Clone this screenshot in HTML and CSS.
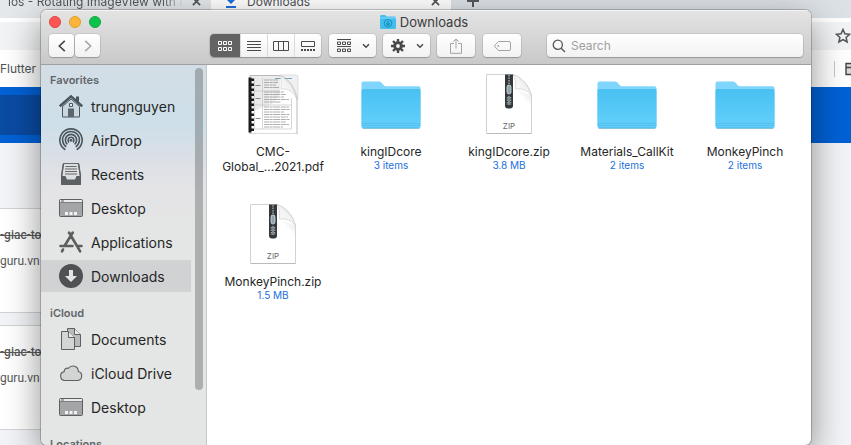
FILE: index.html
```html
<!DOCTYPE html>
<html lang="en">
<head>
<meta charset="utf-8">
<title>Downloads</title>
<link rel="stylesheet" href="styles.css">
</head>
<body>
<svg class="sprite" aria-hidden="true">
  <defs>
    <linearGradient id="folderFill" x1="0" y1="0" x2="0" y2="1">
      <stop offset="0" stop-color="#48c1f2"/><stop offset="1" stop-color="#64d0fa"/>
    </linearGradient>
    <linearGradient id="curl" x1="0" y1="1" x2="1" y2="0">
      <stop offset="0" stop-color="#ffffff"/><stop offset="0.5" stop-color="#f4f4f4"/><stop offset="1" stop-color="#d0d0d0"/>
    </linearGradient>
    <linearGradient id="curlShade" x1="0" y1="1" x2="1" y2="0">
      <stop offset="0.3" stop-color="#ffffff" stop-opacity="0"/><stop offset="1" stop-color="#a8a8a8"/>
    </linearGradient>
  </defs>
  <symbol id="folder" viewBox="0 0 60 60">
    <path d="M0.500 9.500q0-2 2-2h15.500q1.500 0 2.500 1.200l2.500 2.800q.8.800 2 .800h32.500q2 0 2 2v38q0 2-2 2h-55q-2 0-2-2z" fill="#7fd5fb"/>
    <path d="M.5 17q0-1.500 1.500-1.500h56q1.500 0 1.500 1.500v35q0 2-2 2h-55q-2 0-2-2z" fill="url(#folderFill)"/>
    <path d="M.5 15.500h59M1 49.500h58M1 51.500h58" stroke="#3fb2e2" stroke-width=".8" opacity=".6"/>
    <path d="M1.500 54.200h57" stroke="#3b9ac4" stroke-width=".8"/>
  </symbol>
  <symbol id="zip" viewBox="0 0 60 60">
    <path d="M7.500.5H34C44 4 50 12 52.500 22v37.500h-45z" fill="#fff" stroke="#d2d2d2"/>
    <path d="M8 59.500h44.500" stroke="#bbb"/>
    <path d="M37 15L52 22v10z" fill="url(#curlShade)" opacity=".5"/>
    <path d="M34 .5C36.500 4 37 9 36.500 15c6-1 12 1 16 7C50 12 44 4 34 .5z" fill="url(#curl)" stroke="#cfcfcf" stroke-width=".7"/>
    <path d="M26 .5h8v31q0 3-3 3h-2q-3 0-3-3z" fill="#34383a"/>
    <path d="M30 1v9M28 12h4M28 14.500h4M28.500 23v8M31.500 23v8" stroke="#98a4a9" stroke-width="1.500" stroke-dasharray="1.500 1"/>
    <rect x="28" y="11" width="4" height="9" rx="2" fill="#8fa4ac" stroke="#d3dde0" stroke-width=".8"/>
    <path d="M29 22h2v9h-2z" fill="#7d8b90"/>
    <text x="30" y="55" class="zip-text">ZIP</text>
  </symbol>
  <symbol id="pdf" viewBox="0 0 60 60">
    <path d="M7 1.500h30C47 5 52 14 54 25v35H7z" fill="#fff" stroke="#b9b9b9"/>
    <path d="M8 2h29v18L29 30 8 38z" fill="#e4e4e4" opacity=".7"/>
    <path d="M11.500 4v51M19.500 4v51M48.500 24v31M11.500 17h25M11.500 31h37M11.500 55h37" stroke="#c4c4c4" stroke-width=".7"/>
    <path d="M21 6h14M21 8.500h14M21 11h12M21 13.500h15M21 18h20M21 20.500h22M21 23h20M21 25.500h25M21 28h17M21 33h25M21 35.500h26M21 38h20M21 40.500h26M21 43h24M21 45.500h26M21 48h22M21 50.500h25M21 53h19" stroke="#999" stroke-width=".8" stroke-dasharray="5 .6 3 .5 7 .7"/>
    <path d="M12.500 11.500h5M12.500 24.500h5M12.500 44.500h5" stroke="#888"/>
    <path d="M37 1h16q2 0 2 2v23C52 14 47 5 37 1z" fill="#f0f0f0" stroke="#d0d0d0" stroke-width=".6"/>
    <path d="M32 4.500h17" stroke="#6b9db8" stroke-width=".9"/>
    <path d="M36 1.500C39 5 38.500 10 38 15c7-1 13 3 16 11C52 15 46 5 36 1.500z" fill="url(#curl)" stroke="#c8c8c8" stroke-width=".6"/>
    <path d="M7 3.500v55" stroke="#1c1c1c" stroke-width="3"/>
    <path d="M9 4.500v54" stroke="#1c1c1c" stroke-width="4" stroke-dasharray="2.500 2.500"/>
  </symbol>
  <symbol id="home" viewBox="0 0 24 24">
    <path d="M3.500 12.500v10.500h17V12.500L12 5z" fill="#c5d0d7" fill-opacity=".5" stroke="#4b555b"/>
    <path d="M.8 12.300L12 2.400l11.200 9.900" fill="none" stroke="#4b555b" stroke-width="2.600"/>
    <path d="M17 2.500h3V9l-3-2.600z" fill="#4b555b"/>
    <path d="M9 14.500h6V23H9z" fill="#5b666c"/>
    <path d="M10.500 9.500h3v3h-3z" fill="#e2eaf0" stroke="#4b555b"/>
  </symbol>
  <symbol id="airdrop" viewBox="0 0 24 24">
    <g fill="none" stroke="#4c555b" stroke-width="1.600">
      <path d="M6.300 21.700a11.200 11.200 0 1 1 11.400 0"/>
      <path d="M7.300 18.800a8.400 8.400 0 1 1 9.400 0"/>
      <path d="M8.400 16.300a5.600 5.600 0 1 1 7.200 0"/>
      <path d="M10 14.300a2.900 2.900 0 1 1 4 0"/>
    </g>
    <circle cx="12" cy="12.300" r="1.400" fill="#4c555b"/>
  </symbol>
  <symbol id="recents" viewBox="0 0 24 24">
    <path d="M4.500 1.500h15l2 13v8h-19v-8z" fill="#dcdee0" stroke="#666b6f"/>
    <path d="M6.500 4.500h11M6 7h12M6 9.500h12M6 12h12" stroke="#666b6f" stroke-width="1.200"/>
    <path d="M2 14h4.500l1.500 3.500h8l1.500-3.500H22v8q0 1-1 1H3q-1 0-1-1z" fill="#5c6063"/>
    <path d="M4.500 1.500l-2 13M19.500 1.500l2 13" stroke="#5c6063" stroke-width="1.500"/>
  </symbol>
  <symbol id="desktop" viewBox="0 0 24 24">
    <rect x=".5" y="3.500" width="23" height="17" rx="1" fill="#a3a5a6" stroke="#5d6062"/>
    <path d="M1 4h22v2H1z" fill="#ececec"/><path d="M2 5h3" stroke="#5d6062"/>
    <path d="M1 6.500h22" stroke="#7d8082"/>
    <path d="M6 16h3v3H6zM10.500 16h3v3h-3zM15 16h3v3h-3z" fill="#f2f2f2"/>
  </symbol>
  <symbol id="apps" viewBox="0 0 24 24">
    <path d="M13.800 2.500L5.500 16M4 19.500l-1 1.800M10 2.500l9.500 16 1.600 2.800M1.500 16h12M18 16h4.500" fill="none" stroke="#5c5e5f" stroke-width="2.600" stroke-linecap="round"/>
  </symbol>
  <symbol id="down" viewBox="0 0 24 24">
    <circle cx="12" cy="12" r="12" fill="#505152"/>
    <path d="M10 6h4v6h4l-6 6-6-6h4z" fill="#e3e4e5"/>
  </symbol>
  <symbol id="docs" viewBox="0 0 24 24">
    <path d="M8.500 1.500h7l6 6v12h-13z" fill="#b9bbbb" stroke="#5d6062"/>
    <path d="M15.500 1.500v6h6" fill="#eee" stroke="#5d6062"/>
    <path d="M2.500 4.500h7l6 6v12h-13z" fill="#d3d5d5" stroke="#5d6062"/>
    <path d="M9.500 4.500v6h6" fill="#eee" stroke="#5d6062"/>
  </symbol>
  <symbol id="cloud" viewBox="0 0 24 24">
    <path d="M6 19.500a4.500 4.500 0 0 1-.8-8.900 3.200 3.200 0 0 1 4.300-3.300 5.400 5.400 0 0 1 9.800 3.200 4.600 4.600 0 0 1-.5 9z" fill="#d2d4d4" stroke="#5d6062" stroke-width="1.100"/>
  </symbol>
  <symbol id="chevron" viewBox="0 0 8 6">
    <path d="M1 1.200l3 3 3-3" fill="none" stroke="#4a4a4a" stroke-width="1.500"/>
  </symbol>
</svg>

<div class="browser">
  <div class="tabs">
    <div class="tab tab-first"><span class="tab-title">ios - Rotating ImageView with t</span><button class="tab-x" aria-label="Close tab"><svg viewBox="0 0 10 10"><path d="M1 1l8 8M9 1L1 9"/></svg></button></div>
    <div class="tab tab-active"><svg class="fav" viewBox="0 0 10 14"><path d="M3 0h4v5h3L5 10 0 5h3zM0 12h10v2H0z" fill="#1a6fe0"/></svg><span class="tab-title">Downloads</span><button class="tab-x" aria-label="Close tab"><svg viewBox="0 0 10 10"><path d="M1 1l8 8M9 1L1 9"/></svg></button></div>
    <button class="tab-new" aria-label="New tab"><svg viewBox="0 0 12 12"><path d="M6 0v12M0 6h12"/></svg></button>
  </div>
  <div class="address"><svg class="star" viewBox="0 0 16 16"><path d="M8 1.500l1.900 4.300 4.700.5-3.500 3.100 1 4.600L8 11.600 3.900 14l1-4.600L1.400 6.300l4.700-.5z"/></svg></div>
  <div class="bookmarks"><a href="#">Flutter</a><span class="divider"></span><svg class="bm" viewBox="0 0 14 14"><path d="M1 1.500h12v11H1zM1 5.500h12" fill="#d8d8d8" stroke="#444" stroke-width="1.400"/></svg></div>
  <div class="banner"><div class="banner-box"></div></div>
  <div class="cards">
    <div class="card"><s>-giac-to</s><span>guru.vn</span></div>
    <div class="card"><s>-giac-to</s><span>guru.vn</span></div>
  </div>
</div>

<main class="finder">
  <header class="titlebar">
    <div class="title-row">
      <div class="lights"><button class="light red" aria-label="Close"></button><button class="light yellow" aria-label="Minimize"></button><button class="light green" aria-label="Zoom"></button></div>
      <h1 class="title"><svg viewBox="0 0 16 14"><path d="M0 1.500Q0 0 1.500 0H5l1.500 1.500h8Q16 1.500 16 3v9.500q0 1.500-1.500 1.500h-13Q0 14 0 12.500z" fill="#42bdec"/><path d="M0 3h16" stroke="#86d9f8"/><circle cx="8" cy="8.300" r="3.800" fill="none" stroke="#168fbd"/><path d="M8 6v4M6.200 8.500L8 10.300l1.800-1.800" fill="none" stroke="#168fbd" stroke-width="1.200"/></svg>Downloads</h1>
    </div>
    <div class="toolbar">
      <div class="nav">
        <button class="btn nav-btn" aria-label="Back"><svg class="arrow" viewBox="0 0 8 12"><path d="M6.800 .8L1.300 6l5.500 5.200" stroke="#444"/></svg></button>
        <button class="btn nav-btn" aria-label="Forward"><svg class="arrow" viewBox="0 0 8 12"><path d="M1.200 .8L6.700 6l-5.500 5.200" stroke="#a8a8a8"/></svg></button>
      </div>
      <div class="views">
        <button class="view selected" aria-label="Icons"><svg viewBox="0 0 16 12"><path d="M1.500 1.500h3v3h-3zM6.500 1.500h3v3h-3zM11.500 1.500h3v3h-3zM1.500 7.500h3v3h-3zM6.500 7.500h3v3h-3zM11.500 7.500h3v3h-3z" stroke="#fff"/></svg></button>
        <button class="view" aria-label="List"><svg viewBox="0 0 16 12"><path d="M1 1.500h14M1 4.500h14M1 7.500h14M1 10.500h14" stroke="#4a4a4a"/></svg></button>
        <button class="view" aria-label="Columns"><svg viewBox="0 0 16 12"><path d="M.5 1.500h15v9H.5zM5.500 1.500v9M10.500 1.500v9" stroke="#4a4a4a"/></svg></button>
        <button class="view" aria-label="Gallery"><svg viewBox="0 0 16 12"><path d="M1.500 1.500h13v5h-13z" stroke="#4a4a4a"/><path d="M1 10h14" stroke="#4a4a4a" stroke-width="2" stroke-dasharray="2 1"/></svg></button>
      </div>
      <button class="btn menu-btn" aria-label="Arrange"><svg class="ico" viewBox="0 0 16 14"><path d="M1 .5h14M1 7.500h14M1.500 3h3v2.500h-3zM6.500 3h3v2.500h-3zM11.500 3h3v2.500h-3zM1.500 10h3v2.500h-3zM6.500 10h3v2.500h-3zM11.500 10h3v2.500h-3z" stroke="#4a4a4a"/></svg><svg class="chev"><use href="#chevron"/></svg></button>
      <button class="btn menu-btn" aria-label="Actions"><svg class="ico" viewBox="0 0 16 14"><g stroke="#4a4a4a" stroke-width="2.400"><path d="M8 0v14M1 7h14M3 2l10 10M13 2L3 12"/></g><circle cx="8" cy="7" r="4.800" fill="#4a4a4a"/><circle cx="8" cy="7" r="1.900" fill="#f5f5f5"/></svg><svg class="chev"><use href="#chevron"/></svg></button>
      <button class="btn share-btn" aria-label="Share"><svg class="share" viewBox="0 0 12 16"><path d="M4 5.500H.5v9.800h11V5.500H8M6 10.500V1M3.200 3.800L6 1l2.800 2.800"/></svg></button>
      <button class="btn tag-btn" aria-label="Edit tags"><svg class="tag" viewBox="0 0 17 10"><path d="M4.500.5H15q1.500 0 1.500 1.500v6q0 1.500-1.500 1.500H4.500L1.200 6.200q-1-1.200 0-2.400z"/><circle cx="4.300" cy="5" r=".6"/></svg></button>
      <label class="search"><svg viewBox="0 0 14 14"><circle cx="5.800" cy="5.800" r="4.600"/><path d="M9.200 9.200l3.800 3.800"/></svg><input type="search" placeholder="Search" aria-label="Search"></label>
    </div>
  </header>
  <div class="body">
    <aside class="sidebar">
      <nav class="places">
        <h2>Favorites</h2>
        <a href="#"><svg><use href="#home"/></svg>trungnguyen</a>
        <a href="#"><svg><use href="#airdrop"/></svg>AirDrop</a>
        <a href="#"><svg><use href="#recents"/></svg>Recents</a>
        <a href="#"><svg><use href="#desktop"/></svg>Desktop</a>
        <a href="#"><svg><use href="#apps"/></svg>Applications</a>
        <a href="#" class="current"><svg><use href="#down"/></svg>Downloads</a>
        <h2>iCloud</h2>
        <a href="#"><svg><use href="#docs"/></svg>Documents</a>
        <a href="#"><svg><use href="#cloud"/></svg>iCloud Drive</a>
        <a href="#"><svg><use href="#desktop"/></svg>Desktop</a>
        <h2>Locations</h2>
      </nav>
      <div class="track"><div class="thumb"></div></div>
    </aside>
    <section class="files">
      <a class="file" href="#"><svg><use href="#pdf"/></svg><span class="name">CMC-<br>Global_...2021.pdf</span></a>
      <a class="file" href="#"><svg><use href="#folder"/></svg><span class="name">kingIDcore</span><span class="info">3 items</span></a>
      <a class="file" href="#"><svg><use href="#zip"/></svg><span class="name">kingIDcore.zip</span><span class="info">3.8 MB</span></a>
      <a class="file" href="#"><svg><use href="#folder"/></svg><span class="name">Materials_CallKit</span><span class="info">2 items</span></a>
      <a class="file" href="#"><svg><use href="#folder"/></svg><span class="name">MonkeyPinch</span><span class="info">2 items</span></a>
      <a class="file" href="#"><svg><use href="#zip"/></svg><span class="name">MonkeyPinch.zip</span><span class="info">1.5 MB</span></a>
    </section>
  </div>
</main>
</body>
</html>
```
FILE: styles.css
```css
* { box-sizing: border-box; }
body {
  margin: 0;
  height: 100vh;
  overflow: hidden;
  position: relative;
  font-family: Inter, "Liberation Sans", sans-serif;
  color: #262626;
}
a { color: inherit; text-decoration: none; }
button { font: inherit; padding: 0; border: 0; background: none; }
.sprite { position: absolute; width: 0; height: 0; }
.zip-text { font-size: 8px; fill: #666; text-anchor: middle; }

/* Browser behind the window */
.browser { height: 100%; display: flex; flex-direction: column; background: #f3f4f7; }
.tabs { display: flex; height: 34px; margin-top: -16px; flex: none; background: #dce1e6; font-size: 12px; color: #4e5256; }
.tab { display: flex; align-items: center; gap: 8px; padding: 0 10px 0 8px; }
.tab-first { width: 211px; background: #e4e8eb; }
.tab-active { width: 240px; gap: 11px; padding: 0 11px 0 15px; background: #fff; }
.tab-title { flex: 1; white-space: nowrap; overflow: hidden; }
.tab-first .tab-title { background: linear-gradient(90deg, #4e5256 88%, #e4e8eb); background-clip: text; color: transparent; }
.fav { width: 10px; height: 14px; }
.tab-x, .tab-new { display: flex; align-items: center; justify-content: center; }
.tab-x svg { width: 9px; height: 9px; }
.tab-new { padding-left: 16px; }
.tab-new svg { width: 12px; height: 12px; }
.tab-x path, .tab-new path { stroke: #54585c; stroke-width: 2; fill: none; }
.address { flex: none; height: 32px; border-top: 4px solid #fff; background: #f1f3f4; display: flex; align-items: center; justify-content: flex-end; }
.star { width: 16px; height: 16px; fill: none; stroke: #505458; stroke-width: 1.500; }
.bookmarks { flex: none; height: 37px; background: #fff; display: flex; align-items: center; font-size: 12px; color: #505458; overflow: hidden; }
.divider { margin-left: auto; width: 1px; height: 16px; background: #c4c7ca; }
.bm { flex: none; width: 14px; height: 14px; margin: 0 -8px 0 10px; }
.banner { flex: none; height: 56px; padding: 8px 0; background: #0061d5; }
.banner-box { width: 50%; height: 40px; background: #0a4ba3; }
.cards { flex: none; display: flex; flex-direction: column; gap: 12px; padding-top: 65px; }
.card { width: 50%; height: 105px; padding: 16px 0; border: 1px solid #d3d3d6; border-width: 1px 0; background: #fff; display: flex; flex-direction: column; gap: 6px; font: 12px/20px Roboto, sans-serif; color: #5a5a5a; }
.card s { font-weight: 500; }

/* Finder window */
.finder {
  position: absolute;
  inset: 10px 40px 0 41px;
  display: flex;
  flex-direction: column;
  overflow: hidden;
  border-radius: 6px;
  background: #fff;
  box-shadow: 0 0 0 1px rgba(0, 0, 0, .2), 0 12px 36px rgba(0, 0, 0, .45);
}
.titlebar { flex: none; padding: 0 8px 7px; background: linear-gradient(#e4e4e4, #c9c9c9); border-bottom: 1px solid #a0a0a0; box-shadow: inset 0 1px #f4f4f4; }
.title-row { height: 24px; display: grid; grid-template-columns: 1fr auto 1fr; align-items: center; }
.lights { display: flex; gap: 8px; }
.light { width: 12px; height: 12px; border-radius: 50%; }
.red { background: #fc5753; border: 1px solid #e0443e; }
.yellow { background: #fdb43c; border: 1px solid #dfa023; }
.green { background: #0bc24b; border: 1px solid #12a83a; }
.title { margin: 0; display: flex; align-items: center; gap: 4px; padding-right: 4px; font-size: 13px; line-height: 22px; font-weight: 400; color: #3c3c3c; }
.title svg { width: 16px; height: 14px; }
.toolbar { display: flex; height: 23px; }
.btn, .views, .search { display: flex; align-items: center; justify-content: center; height: 23px; border-radius: 4px; background: linear-gradient(#fff, #f2f2f2); box-shadow: 0 0 0 1px rgba(0, 0, 0, .08), 0 1px 1px rgba(0, 0, 0, .2); }
.btn svg, .view svg { fill: none; }
.nav { display: flex; gap: 1px; margin-right: 110px; }
.nav-btn { width: 25px; }
.arrow { width: 8px; height: 12px; stroke-width: 1.600; }
.views { overflow: hidden; margin-right: 8px; }
.view { display: flex; align-items: center; justify-content: center; width: 27px; height: 23px; border-left: 1px solid #dadada; }
.view.selected { width: 30px; border: 0; background: #636363; }
.view svg { width: 16px; height: 12px; }
.menu-btn { width: 47px; gap: 10px; margin-right: 7px; }
.ico { width: 16px; height: 14px; }
.chev { width: 8px; height: 6px; }
.share-btn { width: 38px; margin-right: 8px; }
.tag-btn { width: 38px; margin-right: 26px; }
.share { width: 12px; height: 16px; stroke: #a3a3a3; }
.tag { width: 17px; height: 10px; stroke: #a3a3a3; }
.search { flex: 1; padding-left: 5px; gap: 5px; justify-content: flex-start; }
.search svg { width: 14px; height: 14px; fill: none; stroke: #555; stroke-width: 1.300; }
.search input { flex: 1; min-width: 0; border: 0; padding: 0; background: none; outline: 0; font: 12px Inter, sans-serif; }
.search input::placeholder { color: #a0a0a0; }

.body { flex: 1; min-height: 0; display: flex; }
.sidebar { flex: none; width: 166px; display: flex; overflow: hidden; border-right: 1px solid #c4c8ca; background: linear-gradient(#d3dde5, #cddfe9 60px, #dadfe6 90px, #e4e4e6 125px, #e4e5e5 180px); }
.places { flex: 1; padding-top: 5px; }
.places h2 { margin: 11px 0 0 9px; font-size: 11px; line-height: 20px; font-weight: 600; color: #606568; }
.places h2:first-child { margin-top: 0; }
.places a { display: flex; align-items: center; gap: 8px; height: 32px; margin-bottom: 2px; padding-left: 18px; font-size: 14px; white-space: nowrap; }
.places a:has(+ h2) { margin-bottom: 0; }
.places .current { background: #d1d2d4; }
.places svg { flex: none; width: 24px; height: 24px; }
.track { width: 15px; padding: 3px 3px 0 4px; }
.thumb { height: 322px; border-radius: 4px; background: rgba(90, 94, 96, .4); }
.files { flex: 1; display: grid; grid-template-columns: repeat(auto-fill, 118px); grid-auto-rows: 130px; align-content: start; padding: 9px 5px 0 7px; }
.file { display: flex; flex-direction: column; align-items: center; text-align: center; }
.file svg { flex: none; width: 60px; height: 60px; margin-bottom: 10px; }
.name { font-size: 12px; line-height: 15px; white-space: nowrap; }
.info { font-size: 10px; line-height: 13px; color: #1b6fdc; }
```
